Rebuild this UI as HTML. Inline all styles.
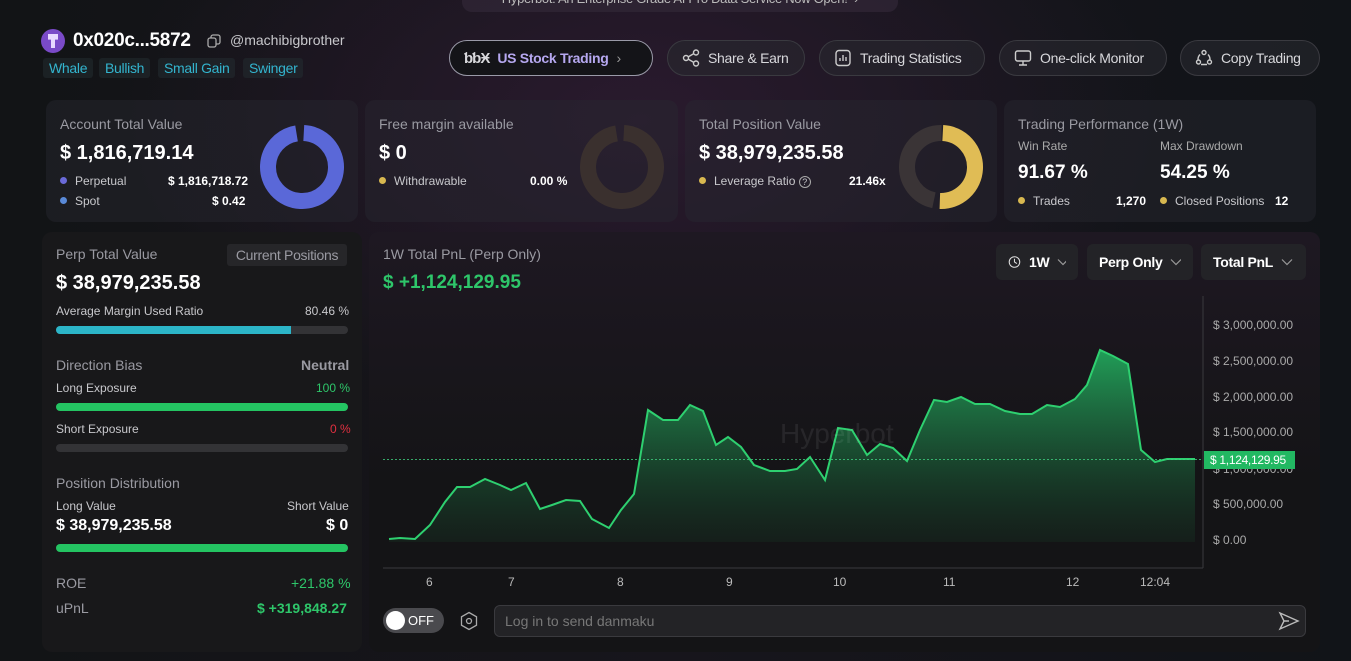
<!DOCTYPE html>
<html><head><meta charset="utf-8"><style>
*{box-sizing:border-box;margin:0;padding:0}
body{width:1351px;height:661px;overflow:hidden;font-family:"Liberation Sans",sans-serif;color:#fff;
background:radial-gradient(ellipse 520px 300px at 640px 120px,#2a1a2e 0%,rgba(30,20,35,0) 100%),linear-gradient(90deg,#121416 0%,#17151c 50%,#111418 100%);position:relative}
.abs{position:absolute;white-space:nowrap}
.card{position:absolute;background:rgba(40,40,48,0.45);border-radius:10px}
.lbl{color:#9a9aa2;font-size:14px}
.big{font-weight:bold;font-size:20px}
.sm{font-size:12px;color:#c8c8cc}
.dot{display:inline-block;width:7px;height:7px;border-radius:50%;margin-right:8px;vertical-align:1px}
.btn{position:absolute;top:40px;height:36px;border:1px solid #3a3a40;border-radius:18px;background:rgba(40,40,46,.6);color:#d8d8dc;font-size:14px;letter-spacing:-0.3px;display:flex;align-items:center;gap:8px;padding:0 14px;white-space:nowrap}
.tag{position:absolute;top:58px;height:20px;padding:0 6px;background:rgba(35,45,50,.5);border-radius:3px;color:#33b5cf;font-size:14px;line-height:20px;letter-spacing:-0.3px}
.bar{position:absolute;height:8px;border-radius:4px;background:#333336}
.sel{position:absolute;top:244px;height:36px;background:#232327;border-radius:6px;font-size:14px;font-weight:bold;display:flex;align-items:center;padding:0 12px;gap:8px;white-space:nowrap;letter-spacing:-0.3px}
.yl{position:absolute;left:1213px;font-size:12px;color:#aaa}
.xl{position:absolute;top:575px;font-size:12px;color:#bbb}
.chev{color:#999;font-weight:normal;font-size:11px}
</style></head><body>
<div class="abs" style="left:462px;top:-8px;width:436px;height:20px;background:rgba(50,40,55,.7);border-radius:0 0 10px 10px;color:#bbb;font-size:13px;text-align:center;line-height:14px;letter-spacing:-0.3px">Hyperbot: An Enterprise Grade AI Pro Data Service Now Open! &nbsp;›</div>

<div class="abs" style="left:41px;top:29px;width:24px;height:24px;border-radius:50%;background:#7a4ac8"><div style="position:absolute;left:7px;top:5px;width:10px;height:14px;background:#e8d8ff;clip-path:polygon(0 0,100% 0,100% 40%,70% 40%,70% 100%,30% 100%,30% 40%,0 40%)"></div></div>
<div class="abs" style="left:73px;top:30px;font-size:19px;font-weight:bold;letter-spacing:-0.3px">0x020c...5872</div>
<svg class="abs" style="left:207px;top:34px" width="14" height="14" fill="none" stroke="#aaa" stroke-width="1.3"><rect x="1" y="4" width="8" height="9" rx="2"/><path d="M4 4V3a2 2 0 0 1 2-2h5a2 2 0 0 1 2 2v5a2 2 0 0 1-2 2h-2"/></svg>
<div class="abs" style="left:230px;top:32px;font-size:14px;color:#c8c8cc">@machibigbrother</div>
<div class="tag" style="left:43px">Whale</div><div class="tag" style="left:99px">Bullish</div><div class="tag" style="left:158px">Small Gain</div><div class="tag" style="left:243px">Swinger</div>

<div class="btn" style="left:449px;width:204px;border-color:#9a9aa8;background:#141418"><b style="font-size:15px;letter-spacing:-1px">ƅƅӾ</b><span style="color:#b6a8f0;font-weight:bold">US Stock Trading</span><span style="color:#999">›</span></div>
<div class="btn" style="left:667px;width:138px"><svg width="18" height="18" viewBox="0 0 18 18" fill="none" stroke="#ccc" stroke-width="1.4"><circle cx="4" cy="9" r="2.5"/><circle cx="14" cy="3.5" r="2.5"/><circle cx="14" cy="14.5" r="2.5"/><path d="M6 8L12 4.5M6 10L12 13.5"/></svg>Share &amp; Earn</div>
<div class="btn" style="left:819px;width:166px"><svg width="18" height="18" viewBox="0 0 18 18" fill="none" stroke="#ccc" stroke-width="1.4"><rect x="2" y="1.5" width="14" height="15" rx="3"/><path d="M6 12V9M9 12V6M12 12V8"/></svg>Trading Statistics</div>
<div class="btn" style="left:999px;width:168px"><svg width="18" height="18" viewBox="0 0 18 18" fill="none" stroke="#ccc" stroke-width="1.4"><rect x="1.5" y="2" width="15" height="10" rx="2"/><path d="M9 12v4M5 16h8"/></svg>One-click Monitor</div>
<div class="btn" style="left:1180px;width:140px"><svg width="18" height="18" viewBox="0 0 18 18" fill="none" stroke="#ccc" stroke-width="1.4"><circle cx="9" cy="3.5" r="2"/><circle cx="3.5" cy="13" r="2"/><circle cx="14.5" cy="13" r="2"/><path d="M5 5.5A7 7 0 0 0 3 10.5M13 5.5A7 7 0 0 1 15 10.5M6 15.5h6"/></svg>Copy Trading</div>

<div class="card" style="left:46px;top:100px;width:312px;height:122px"></div>
<div class="card" style="left:365px;top:100px;width:313px;height:122px"></div>
<div class="card" style="left:685px;top:100px;width:312px;height:122px"></div>
<div class="card" style="left:1004px;top:100px;width:312px;height:122px"></div>

<div class="abs lbl" style="left:60px;top:116px">Account Total Value</div>
<div class="abs big" style="left:60px;top:142px">$ 1,816,719.14</div>
<div class="abs sm" style="left:60px;top:174px"><span class="dot" style="background:#6a6ad8"></span>Perpetual</div>
<div class="abs sm" style="left:168px;top:174px;color:#fff;font-weight:bold">$ 1,816,718.72</div>
<div class="abs sm" style="left:60px;top:194px"><span class="dot" style="background:#5a8ad8"></span>Spot</div>
<div class="abs sm" style="left:212px;top:194px;color:#fff;font-weight:bold">$ 0.42</div>
<svg class="abs" style="left:260px;top:125px" width="84" height="84"><circle cx="42" cy="42" r="34" fill="none" stroke="#5a68d8" stroke-width="16" stroke-dasharray="206 8" transform="rotate(-87 42 42)"/></svg>

<div class="abs lbl" style="left:379px;top:116px">Free margin available</div>
<div class="abs big" style="left:379px;top:142px">$ 0</div>
<div class="abs sm" style="left:379px;top:174px"><span class="dot" style="background:#d8b850"></span>Withdrawable</div>
<div class="abs sm" style="left:530px;top:174px;color:#fff;font-weight:bold">0.00 %</div>
<svg class="abs" style="left:580px;top:125px" width="84" height="84"><circle cx="42" cy="42" r="34" fill="none" stroke="#3a302e" stroke-width="16" stroke-dasharray="206 8" transform="rotate(-87 42 42)"/></svg>

<div class="abs lbl" style="left:699px;top:116px">Total Position Value</div>
<div class="abs big" style="left:699px;top:142px">$ 38,979,235.58</div>
<div class="abs sm" style="left:699px;top:174px"><span class="dot" style="background:#d8b850"></span>Leverage Ratio <span style="display:inline-block;width:12px;height:12px;border:1px solid #aaa;border-radius:50%;font-size:9px;text-align:center;line-height:11px">?</span></div>
<div class="abs sm" style="left:849px;top:174px;color:#fff;font-weight:bold">21.46x</div>
<svg class="abs" style="left:899px;top:125px" width="84" height="84"><circle cx="42" cy="42" r="34" fill="none" stroke="#3a3436" stroke-width="16" stroke-dasharray="100 7" stroke-dashoffset="-112" transform="rotate(-87 42 42)"/><circle cx="42" cy="42" r="34" fill="none" stroke="#e0bc55" stroke-width="16" stroke-dasharray="106 108" transform="rotate(-87 42 42)"/></svg>

<div class="abs lbl" style="left:1018px;top:116px">Trading Performance (1W)</div>
<div class="abs" style="left:1018px;top:139px;font-size:12px;color:#aaa">Win Rate</div>
<div class="abs" style="left:1160px;top:139px;font-size:12px;color:#aaa">Max Drawdown</div>
<div class="abs big" style="left:1018px;top:162px;font-size:19px">91.67 %</div>
<div class="abs big" style="left:1160px;top:162px;font-size:19px">54.25 %</div>
<div class="abs sm" style="left:1018px;top:194px"><span class="dot" style="background:#d8b850"></span>Trades</div>
<div class="abs sm" style="left:1116px;top:194px;color:#fff;font-weight:bold">1,270</div>
<div class="abs sm" style="left:1160px;top:194px"><span class="dot" style="background:#d8b850"></span>Closed Positions</div>
<div class="abs sm" style="left:1275px;top:194px;color:#fff;font-weight:bold">12</div>

<div class="card" style="left:42px;top:232px;width:320px;height:420px;background:#18181a"></div>
<div class="abs lbl" style="left:56px;top:246px">Perp Total Value</div>
<div class="abs" style="left:227px;top:244px;width:120px;height:22px;background:#262629;border-radius:3px;color:#9a9aa2;font-size:14px;text-align:center;line-height:22px;letter-spacing:-0.3px">Current Positions</div>
<div class="abs big" style="left:56px;top:272px">$ 38,979,235.58</div>
<div class="abs sm" style="left:56px;top:304px">Average Margin Used Ratio</div>
<div class="abs sm" style="left:305px;top:304px">80.46 %</div>
<div class="bar" style="left:56px;top:326px;width:292px"></div><div class="bar" style="left:56px;top:326px;width:235px;background:#2cb5c8;border-radius:4px 0 0 4px"></div>
<div class="abs lbl" style="left:56px;top:357px">Direction Bias</div>
<div class="abs lbl" style="left:301px;top:357px;font-weight:bold">Neutral</div>
<div class="abs sm" style="left:56px;top:381px">Long Exposure</div>
<div class="abs sm" style="left:316px;top:381px;color:#2ec66a">100 %</div>
<div class="bar" style="left:56px;top:403px;width:292px;background:#24c462"></div>
<div class="abs sm" style="left:56px;top:422px">Short Exposure</div>
<div class="abs sm" style="left:330px;top:422px;color:#e03040">0 %</div>
<div class="bar" style="left:56px;top:444px;width:292px"></div>
<div class="abs lbl" style="left:56px;top:475px">Position Distribution</div>
<div class="abs sm" style="left:56px;top:499px">Long Value</div>
<div class="abs sm" style="left:287px;top:499px">Short Value</div>
<div class="abs" style="left:56px;top:517px;font-size:16px;font-weight:bold">$ 38,979,235.58</div>
<div class="abs" style="left:326px;top:517px;font-size:16px;font-weight:bold">$ 0</div>
<div class="bar" style="left:56px;top:544px;width:292px;background:#24c462"></div>
<div class="abs lbl" style="left:56px;top:575px">ROE</div>
<div class="abs" style="left:291px;top:575px;font-size:14px;color:#2ec66a">+21.88 %</div>
<div class="abs lbl" style="left:56px;top:600px">uPnL</div>
<div class="abs" style="left:257px;top:600px;font-size:14px;color:#2ec66a;font-weight:bold">$ +319,848.27</div>

<div class="card" style="left:369px;top:232px;width:951px;height:420px;background:linear-gradient(180deg,#1e1822,#141416 60%)"></div>
<div class="abs lbl" style="left:383px;top:246px">1W Total PnL (Perp Only)</div>
<div class="abs" style="left:383px;top:272px;font-size:19px;font-weight:bold;color:#2ec66a">$ +1,124,129.95</div>
<div class="sel" style="left:996px;width:82px"><svg width="18" height="18" viewBox="0 0 16 16" fill="none" stroke="#ddd" stroke-width="1.3"><circle cx="8" cy="8" r="6.5"/><path d="M8 4v4l3 2"/></svg>1W <svg width="12" height="8" fill="none" stroke="#999" stroke-width="1.2"><path d="M1 1.5l5 5 5-5"/></svg></div>
<div class="sel" style="left:1087px;width:106px">Perp Only <svg width="12" height="8" fill="none" stroke="#999" stroke-width="1.2"><path d="M1 1.5l5 5 5-5"/></svg></div>
<div class="sel" style="left:1201px;width:105px">Total PnL <svg width="12" height="8" fill="none" stroke="#999" stroke-width="1.2"><path d="M1 1.5l5 5 5-5"/></svg></div>

<svg class="abs" style="left:0;top:0" width="1351" height="661">
<defs><linearGradient id="g" x1="0" y1="340" x2="0" y2="542" gradientUnits="userSpaceOnUse"><stop offset="0" stop-color="#22b060" stop-opacity=".95"/><stop offset="1" stop-color="#1a5a34" stop-opacity=".15"/></linearGradient></defs>
<line x1="1203" y1="296" x2="1203" y2="568" stroke="#3a3a3e"/>
<line x1="383" y1="568" x2="1203" y2="568" stroke="#3a3a3e"/>
<path d="M389,539 L400,538 L415,539 L430,525 L445,502 L457,487 L470,487 L485,479 L500,485 L511,490 L526,483 L540,509 L552,505 L566,500 L580,501 L592,519 L609,528 L621,510 L634,494 L648,410 L663,420 L678,420 L690,405 L703,411 L716,445 L728,437 L741,447 L754,465 L770,471 L785,471 L797,469 L810,457 L825,480 L838,428 L852,430 L867,455 L880,444 L893,448 L907,461 L920,430 L934,400 L947,402 L961,397 L975,404 L990,404 L1005,411 L1020,414 L1032,414 L1047,405 L1060,407 L1075,399 L1087,385 L1100,350 L1113,356 L1128,364 L1141,450 L1155,462 L1167,459 L1195,459 L1195,542 L389,542 Z" fill="url(#g)"/>
<path d="M389,539 L400,538 L415,539 L430,525 L445,502 L457,487 L470,487 L485,479 L500,485 L511,490 L526,483 L540,509 L552,505 L566,500 L580,501 L592,519 L609,528 L621,510 L634,494 L648,410 L663,420 L678,420 L690,405 L703,411 L716,445 L728,437 L741,447 L754,465 L770,471 L785,471 L797,469 L810,457 L825,480 L838,428 L852,430 L867,455 L880,444 L893,448 L907,461 L920,430 L934,400 L947,402 L961,397 L975,404 L990,404 L1005,411 L1020,414 L1032,414 L1047,405 L1060,407 L1075,399 L1087,385 L1100,350 L1113,356 L1128,364 L1141,450 L1155,462 L1167,459 L1195,459" fill="none" stroke="#2ed070" stroke-width="2"/>
<line x1="383" y1="459.5" x2="1203" y2="459.5" stroke="#3fd080" stroke-dasharray="2 2" opacity=".8"/>
<text x="780" y="443" font-family="Liberation Sans" font-size="28" fill="#ffffff" opacity=".07">Hyperbot</text>
</svg>
<div class="yl" style="top:318px">$ 3,000,000.00</div>
<div class="yl" style="top:354px">$ 2,500,000.00</div>
<div class="yl" style="top:390px">$ 2,000,000.00</div>
<div class="yl" style="top:425px">$ 1,500,000.00</div>
<div class="yl" style="top:462px">$ 1,000,000.00</div>
<div class="yl" style="top:497px">$ 500,000.00</div>
<div class="yl" style="top:533px">$ 0.00</div>
<div class="abs" style="left:1204px;top:451px;width:91px;height:18px;background:#22b862;color:#fff;font-size:12px;line-height:18px;padding-left:6px;letter-spacing:-0.3px">$ 1,124,129.95</div>
<div class="xl" style="left:426px">6</div><div class="xl" style="left:508px">7</div><div class="xl" style="left:617px">8</div><div class="xl" style="left:726px">9</div><div class="xl" style="left:833px">10</div><div class="xl" style="left:943px">11</div><div class="xl" style="left:1066px">12</div><div class="xl" style="left:1140px">12:04</div>

<div class="abs" style="left:383px;top:608px;width:61px;height:25px;border-radius:13px;background:#4a4a4e"><div style="position:absolute;left:3px;top:3px;width:19px;height:19px;border-radius:50%;background:#fff"></div><span style="position:absolute;left:25px;top:5px;font-size:13px">OFF</span></div>
<svg class="abs" style="left:459px;top:611px" width="20" height="20" fill="none" stroke="#aaa" stroke-width="1.3"><path d="M10 1.5L17.5 5.8V14.2L10 18.5L2.5 14.2V5.8Z"/><circle cx="10" cy="10" r="2.5"/></svg>
<div class="abs" style="left:494px;top:605px;width:812px;height:32px;border:1px solid #3a3a3e;border-radius:6px;background:#232326;color:#777;font-size:14px;line-height:30px;padding-left:10px">Log in to send danmaku</div>
<svg class="abs" style="left:1278px;top:611px" width="22" height="20" fill="none" stroke="#bbb" stroke-width="1.4"><path d="M2 2L20 10L2 18L6 10Z M6 10H11"/></svg>
</body></html>
